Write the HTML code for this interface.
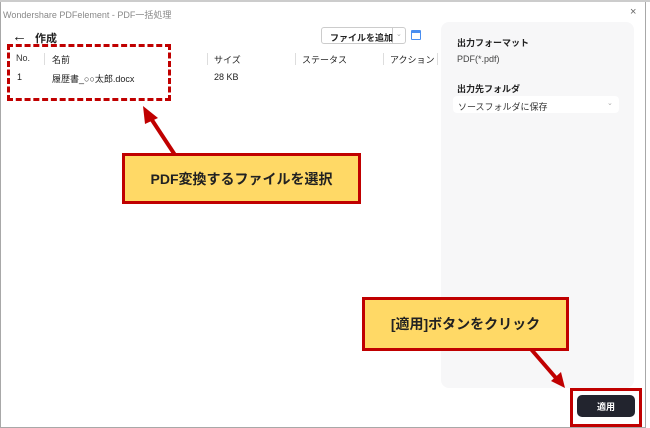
<!DOCTYPE html>
<html><head><meta charset="utf-8"><style>
*{margin:0;padding:0;box-sizing:border-box}
body{width:650px;height:428px;background:#fff;font-family:"Liberation Sans","Noto Sans CJK JP",sans-serif;position:relative;overflow:hidden;color:#222}
.a{position:absolute;white-space:nowrap}
.s{font-size:9px}
</style></head><body>
<div class="a" style="left:0;top:0;width:646px;height:428px;border:1px solid #a8a8a8;border-top:none"></div>
<div class="a" style="left:0;top:0;width:650px;height:2px;background:#ccc"></div>
<div class="a s" style="left:3px;top:8px;color:#888">Wondershare PDFelement - PDF一括処理</div>
<div class="a" style="left:630px;top:6px;font-size:11px;color:#666">×</div>
<div class="a" style="left:12px;top:28px;font-size:15px">←</div>
<div class="a" style="left:35px;top:30px;font-size:11px;font-weight:bold">作成</div>
<div class="a s" style="left:16px;top:53px;color:#333">No.</div>
<div class="a" style="left:44px;top:53px;width:1px;height:12px;background:#ddd"></div>
<div class="a s" style="left:52px;top:53px">名前</div>
<div class="a" style="left:207px;top:53px;width:1px;height:12px;background:#ddd"></div>
<div class="a s" style="left:214px;top:53px">サイズ</div>
<div class="a" style="left:295px;top:53px;width:1px;height:12px;background:#ddd"></div>
<div class="a s" style="left:302px;top:53px">ステータス</div>
<div class="a" style="left:383px;top:53px;width:1px;height:12px;background:#ddd"></div>
<div class="a s" style="left:390px;top:53px">アクション</div>
<div class="a" style="left:437px;top:53px;width:1px;height:12px;background:#ddd"></div>
<div class="a s" style="left:17px;top:72px">1</div>
<div class="a s" style="left:52px;top:72px">履歴書_○○太郎.docx</div>
<div class="a s" style="left:214px;top:72px">28 KB</div>
<div class="a" style="left:7px;top:44px;width:164px;height:57px;border:3px dashed #c00000"></div>
<div class="a" style="left:321px;top:27px;width:85px;height:17px;border:1px solid #ccc;border-radius:3px"></div>
<div class="a" style="left:392px;top:27px;width:1px;height:17px;background:#ccc"></div>
<div class="a s" style="left:330px;top:31px;font-weight:bold">ファイルを追加</div>
<div class="a" style="left:396px;top:30px;font-size:7px;color:#aaa">⌄</div>
<div class="a" style="left:411px;top:30px;width:10px;height:10px;border:1.5px solid #4a8ef0;border-top-width:3px;border-radius:1px"></div>
<div class="a" style="left:441px;top:22px;width:193px;height:366px;background:#f7f7f8;border-radius:8px"></div>
<div class="a s" style="left:457px;top:36px;font-weight:bold">出力フォーマット</div>
<div class="a s" style="left:457px;top:54px;color:#444">PDF(*.pdf)</div>
<div class="a s" style="left:457px;top:82px;font-weight:bold">出力先フォルダ</div>
<div class="a" style="left:453px;top:96px;width:166px;height:17px;background:#fff;border-radius:4px"></div>
<div class="a s" style="left:458px;top:100px;color:#333">ソースフォルダに保存</div>
<div class="a" style="left:607px;top:99px;font-size:7px;color:#aaa">⌄</div>
<svg class="a" style="left:0;top:0" width="650" height="428">
<line x1="175" y1="155" x2="150" y2="117" stroke="#c00000" stroke-width="4"/>
<polygon points="143,106 158,118 145,124" fill="#c00000"/>
<line x1="530" y1="348" x2="556" y2="378" stroke="#c00000" stroke-width="4"/>
<polygon points="565,388 551,381 561,372" fill="#c00000"/>
</svg>
<div class="a" style="left:122px;top:153px;width:239px;height:51px;background:#ffd966;border:3px solid #c00000;font-size:14px;font-weight:bold;display:flex;align-items:center;justify-content:center">PDF変換するファイルを選択</div>
<div class="a" style="left:362px;top:297px;width:207px;height:54px;background:#ffd966;border:3px solid #c00000;font-size:14px;font-weight:bold;display:flex;align-items:center;justify-content:center">[適用]ボタンをクリック</div>
<div class="a" style="left:570px;top:388px;width:72px;height:39px;border:3px solid #c00000"></div>
<div class="a" style="left:577px;top:395px;width:58px;height:22px;background:#22242e;border-radius:5px;color:#fff;font-size:9px;font-weight:bold;display:flex;align-items:center;justify-content:center">適用</div>
</body></html>
